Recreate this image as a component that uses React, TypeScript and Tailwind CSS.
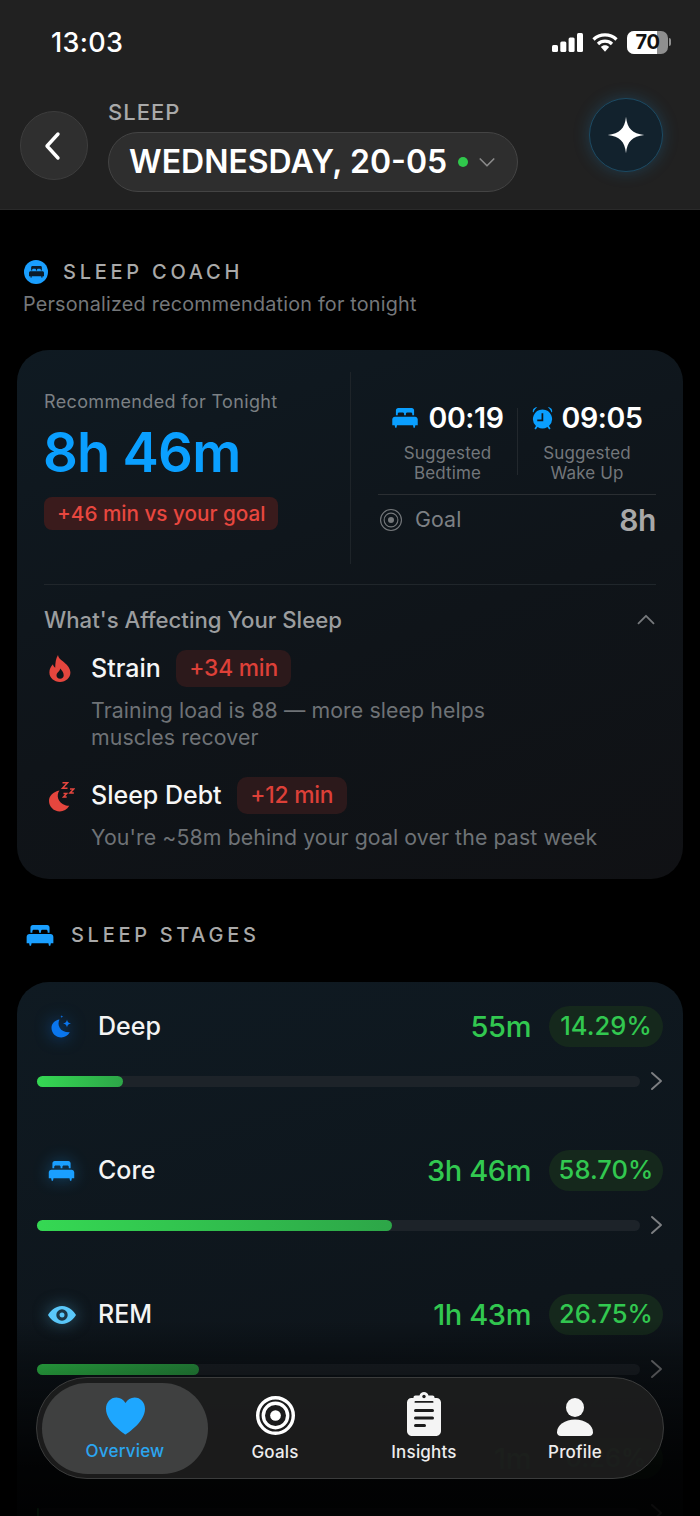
import React from "react";

const FONT = { fontFamily: "Inter, 'Liberation Sans', sans-serif" };

function Bed({ className }: { className?: string }) {
  return (
    <svg viewBox="0 0 28 22" className={className} fill="currentColor">
      <path d="M4 2.5C4 1.1 5.1 0 6.5 0h15C22.900 0 24 1.100 24 2.500V8h-2V6.500C22 5.700 21.300 5 20.500 5h-4C15.700 5 15 5.700 15 6.500V8h-2V6.500C13 5.700 12.300 5 11.500 5h-4C6.700 5 6 5.700 6 6.500V8H4z" />
      <path d="M3 9.500h22c1.700 0 3 1.300 3 3V19h-2.600l-.6 2.800h-1.400L22.800 19H5.200l-.6 2.800H3.200L2.600 19H0v-6.500c0-1.700 1.300-3 3-3z" />
    </svg>
  );
}

function Chevron({ dir, className }: { dir: "up" | "down"; className?: string }) {
  const d = { up: "M3 16 L12 7 L21 16", down: "M3 8 L12 17 L21 8" }[dir];
  return (
    <svg viewBox="0 0 24 24" className={className} fill="none" stroke="currentColor" strokeWidth="2.200" strokeLinecap="round" strokeLinejoin="round">
      <path d={d} />
    </svg>
  );
}

function Target({ className, sw = 2 }: { className?: string; sw?: number }) {
  return (
    <svg viewBox="0 0 40 40" className={className} fill="none" stroke="currentColor" strokeWidth={sw}>
      <circle cx="20" cy="20" r={20 - sw / 2} />
      <circle cx="20" cy="20" r="12.500" />
      <circle cx="20" cy="20" r="5.500" fill="currentColor" stroke="none" />
    </svg>
  );
}

function Flame({ className }: { className?: string }) {
  return (
    <svg viewBox="0 0 22 27" className={className} fill="currentColor">
      <path
        fillRule="evenodd"
        d="M9 0c.6 3.600 3 4.600 6 7.200 3.600 3 6.400 6.500 6.400 10.400 0 5.300-4.500 9.400-10.400 9.400S.4 22.900.4 17.600c0-3.400 1.400-6.300 3.600-8.300.3 1.700 1 2.800 2.200 3.400C6.300 7.800 6.800 3.600 9 0zM11.200 13.500c-.2 1.700-1 2.400-2 3.400-1 1-1.700 2-1.700 3.300 0 2 1.500 3.500 3.600 3.500s3.600-1.500 3.600-3.500c0-2.800-1.800-4.600-3.500-6.700z"
      />
    </svg>
  );
}

function MoonZzz({ className }: { className?: string }) {
  return (
    <svg viewBox="0 0 26 30" className={className} fill="currentColor">
      <path d="M10.500 8.500C7 13 8.500 21 17 23.500c1 .3 2.200.4 3.300.3C18 27.500 14.500 29.500 10.800 29.500 4.800 29.500 0 24.800 0 18.800 0 14 4.200 9.600 10.500 8.500z" />
      <g fill="none" stroke="currentColor" strokeWidth="1.500" strokeLinejoin="miter">
        <path d="M13.500 .8h5l-5 5.400h5" />
        <path d="M21 7h3.800l-3.800 4h3.800" />
        <path d="M14.500 11.500h3.200l-3.200 3.600h3.200" />
      </g>
    </svg>
  );
}

function MoonStars({ className }: { className?: string }) {
  return (
    <svg viewBox="0 0 24 24" className={className} fill="currentColor">
      <path d="M9.500 4.500C6.800 9.800 9.600 17.500 19.800 17.300 18 20.500 14.800 22.500 11.300 22.500 5.800 22.500 1.500 18.200 1.500 12.800 1.500 8.700 5 5 9.500 4.500z" />
      <path d="M17 4.500c.3 2.500 1.400 3.600 4 4-2.600.4-3.700 1.500-4 4-.3-2.500-1.400-3.600-4-4 2.600-.4 3.700-1.500 4-4z" />
      <path d="M11.800 0c.1 1 .6 1.500 1.600 1.600-1 .1-1.500.6-1.600 1.600-.1-1-.6-1.500-1.600-1.600 1-.1 1.500-.6 1.600-1.600z" />
    </svg>
  );
}

function Eye({ className }: { className?: string }) {
  return (
    <svg viewBox="0 0 28 18" className={className} fill="currentColor">
      <path
        fillRule="evenodd"
        d="M14 0c7 0 12.300 5.600 14 9-1.700 3.400-7 9-14 9S1.700 12.400 0 9C1.700 5.600 7 0 14 0zm0 3.300a5.700 5.700 0 1 0 0 11.400 5.700 5.700 0 0 0 0-11.400zm0 3.200a2.500 2.500 0 1 1 0 5 2.500 2.500 0 0 1 0-5z"
      />
    </svg>
  );
}

function Alarm({ className }: { className?: string }) {
  return (
    <svg viewBox="0 0 22 26" className={className} fill="currentColor">
      <path d="M1 6.500C.2 3.800 2.300 1 5.500 1.200 3.700 2.400 2.300 4.200 1.700 6.500zM21 6.500C21.800 3.800 19.700 1 16.500 1.200 18.300 2.400 19.700 4.200 20.300 6.500z" />
      <path
        fillRule="evenodd"
        d="M11 3.500a10 10 0 0 1 6.800 17.300l1.700 2.600-1.500 1-1.800-2.400a10 10 0 0 1-10.400 0L4 24.400l-1.500-1 1.700-2.600A10 10 0 0 1 11 3.500zM10 7.500v6.500H5.500v1.800H11.800V7.500z"
      />
    </svg>
  );
}

function Heart({ className }: { className?: string }) {
  return (
    <svg viewBox="0 0 40 38" className={className} fill="currentColor">
      <path d="M20 38C17.500 36.200 0 25 0 11.500 0 5 4.600 0 10.700 0 14.700 0 18 2.200 20 5.700 22 2.200 25.300 0 29.300 0 35.400 0 40 5 40 11.500 40 25 22.500 36.200 20 38z" />
    </svg>
  );
}

function Clipboard({ className }: { className?: string }) {
  return (
    <svg viewBox="0 0 34 44" className={className}>
      <path
        fill="currentColor"
        d="M17 0c2.200 0 4 1.400 4.500 3.400h4c1.200 0 2 .8 2 2V6h2c2.500 0 4.500 2 4.500 4.500V39c0 2.800-2.200 5-5 5H5c-2.800 0-5-2.200-5-5V10.500C0 8 2 6 4.500 6h2v-.6c0-1.200.8-2 2-2h4C13 1.400 14.800 0 17 0z"
      />
      <rect x="7.500" y="9" width="19" height="1.800" rx=".9" fill="#1c1c1c" />
      <circle cx="17" cy="4.500" r="1.700" fill="#1c1c1c" />
      <rect x="7" y="17" width="20" height="3" rx="1.500" fill="#1c1c1c" />
      <rect x="7" y="24.500" width="20" height="3" rx="1.500" fill="#1c1c1c" />
      <rect x="7" y="32" width="12" height="3" rx="1.500" fill="#1c1c1c" />
    </svg>
  );
}

function Person({ className }: { className?: string }) {
  return (
    <svg viewBox="0 0 36 38" className={className} fill="currentColor">
      <ellipse cx="18" cy="9.500" rx="9" ry="9.500" />
      <path d="M18 21.500c10 0 18 5.600 18 12.700 0 2.300-1.500 3.800-3.800 3.800H3.800C1.500 38 0 36.500 0 34.200 0 27.100 8 21.500 18 21.500z" />
    </svg>
  );
}

function Stage({
  icon,
  name,
  time,
  pct,
  fill,
}: {
  icon?: React.ReactNode;
  name?: string;
  time: string;
  pct: string;
  fill: number;
}) {
  return (
    <div className="h-[144px] px-[20px] pt-[24px]">
      <div className="flex h-[41px] items-center">
        <div className="flex w-[48px] justify-center pl-[1px]">{icon}</div>
        {name && <span className="ml-[13px] mt-[1px] text-[25px] font-medium text-[#f4f4f4]">{name}</span>}
        <span className="ml-auto mt-[1px] text-[29px] font-medium tracking-[-0.4px] text-[#32c850]">{time}</span>
        <span className="ml-[18px] flex h-[41px] w-[114px] items-center justify-center rounded-full bg-[#15281c] text-[25.500px] font-medium tracking-[0.05px] text-[#32c850]">
          {pct}
        </span>
      </div>
      <div className="mt-[24px] flex items-center">
        <div className="h-[11px] flex-1 rounded-full bg-[#1d2329]">
          <div
            className="h-full rounded-full bg-[linear-gradient(90deg,#35d853,#2da648)]"
            style={{ width: `${fill}px` }}
          />
        </div>
        <svg viewBox="0 0 13 20" className="ml-[10px] h-[20px] w-[13px] text-[#7d7f82]" fill="none" stroke="currentColor" strokeWidth="1.900" strokeLinecap="round" strokeLinejoin="round">
          <path d="M2 2 L11 10 L2 18" />
        </svg>
      </div>
    </div>
  );
}

function Factor({
  icon,
  name,
  delta,
  desc,
}: {
  icon: React.ReactNode;
  name: string;
  delta: string;
  desc: React.ReactNode;
}) {
  return (
    <div className="flex">
      <div className="flex w-[48px] shrink-0 justify-start pt-[5px] pl-[5px]">{icon}</div>
      <div>
        <div className="flex h-[37px] items-center">
          <span className="mt-[1px] -ml-[1px] text-[25px] font-medium text-[#f6f6f6]">{name}</span>
          <span className="ml-[15px] flex h-[37px] items-center rounded-[10px] bg-[#2c191b] px-[13.500px] text-[22.800px] font-medium tracking-[-0.2px] text-[#dd4038]">
            {delta}
          </span>
        </div>
        <p className="mt-[10px] -ml-[1px] text-[21.300px] leading-[27px] tracking-[0.1px] text-[#6e7276]">{desc}</p>
      </div>
    </div>
  );
}

export default function App() {
  return (
    <div style={FONT} className="relative h-[1516px] w-[700px] overflow-hidden bg-black">
      {/* Header */}
      <header className="h-[210px] border-b border-[#2a2a2a] bg-[#212121]">
        <div className="flex h-[84px] items-center pl-[51px] pr-[29px]">
          <span className="mt-[2px] text-[27px] font-medium tracking-[0.3px] text-white">13:03</span>
          <div className="ml-auto flex items-center">
            <svg viewBox="0 0 31 19" className="h-[19px] w-[31px] text-white" fill="currentColor">
              <rect x="0" y="12" width="6" height="7" rx="1.500" />
              <rect x="8.300" y="8.500" width="6" height="10.500" rx="1.500" />
              <rect x="16.600" y="4.500" width="6" height="14.500" rx="1.500" />
              <rect x="25" y="0" width="6" height="19" rx="1.500" />
            </svg>
            <svg viewBox="0 0 26 20" className="ml-[9px] h-[20px] w-[26px] text-white" fill="none" stroke="currentColor" strokeWidth="3.200">
              <path d="M1.500 7.500C7.800 1.300 18.200 1.300 24.500 7.500" />
              <path d="M6 12c3.900-3.800 10.100-3.800 14 0" />
              <path fill="currentColor" stroke="none" d="M13 13.200c1.600 0 3 .6 4.100 1.700L13 19.800 8.900 14.900c1.100-1.100 2.500-1.700 4.100-1.700z" />
            </svg>
            <div className="relative ml-[9px] h-[23px] w-[41px] overflow-hidden rounded-[7px] bg-[#8f8f8f]">
              <div className="absolute inset-y-0 left-0 w-[30px] bg-white" />
              <span className="absolute inset-0 flex items-center justify-center text-[20px] font-bold leading-none tracking-[-0.5px] text-[#111]">
                70
              </span>
            </div>
            <div className="ml-[1px] h-[8px] w-[2px] rounded-r-full bg-[#8f8f8f]" />
          </div>
        </div>
        <div className="flex pl-[20px] pr-[37px]">
          <button className="mt-[27px] flex h-[69px] w-[68px] items-center justify-center rounded-full border border-[#3d3d3d] bg-[#2f2f2f] text-white">
            <svg viewBox="0 0 18 30" className="mr-[4px] h-[30px] w-[18px]" fill="none" stroke="currentColor" strokeWidth="3.400" strokeLinecap="round" strokeLinejoin="round">
              <path d="M15 3 L4 15 L15 27" />
            </svg>
          </button>
          <div className="ml-[20px]">
            <div className="mt-[16px] h-[24px] text-[22px] font-medium leading-[24px] tracking-[1px] text-[#a9a9a9]">
              SLEEP
            </div>
            <div className="mt-[8px] flex h-[60px] w-[410px] items-center rounded-full border border-[#444444] bg-[#2e2e2e] pl-[20px]">
              <span className="text-[32px] font-semibold text-white">WEDNESDAY, 20-05</span>
              <span className="ml-[11px] h-[10px] w-[10px] rounded-full bg-[#30c84c]" />
              <Chevron dir="down" className="ml-[10px] h-[18px] w-[18px] text-[#8b8b8b]" />
            </div>
          </div>
          <button className="ml-auto mt-[14px] flex h-[74px] w-[74px] items-center justify-center rounded-full border border-[#1c4a63] bg-[#12222d] text-white shadow-[0_0_16px_rgba(30,130,190,0.28)]">
            <svg viewBox="0 0 24 24" className="h-[38px] w-[38px]" fill="currentColor">
              <path d="M12 0.500C12.800 8 16 11.200 23.500 12 16 12.800 12.800 16 12 23.500 11.200 16 8 12.800 0.500 12 8 11.200 11.200 8 12 0.500Z" />
            </svg>
          </button>
        </div>
      </header>

      {/* Sleep coach heading */}
      <section className="pl-[24px] pt-[49px]">
        <div className="flex h-[26px] items-center">
          <span className="flex h-[24px] w-[24px] items-center justify-center rounded-full bg-[#1a9fff] text-[#0b1c2a]">
            <Bed className="h-[12px] w-[15px]" />
          </span>
          <span className="ml-[15px] text-[20px] font-medium tracking-[3.750px] text-[#a9a9a9]">SLEEP COACH</span>
        </div>
        <p className="mt-[6px] -ml-[1px] text-[19.800px] leading-[26px] tracking-[0.2px] text-[#74777a]">
          Personalized recommendation for tonight
        </p>
      </section>

      {/* Coach card */}
      <section className="mx-[17px] mt-[33px] h-[529px] rounded-[32px] bg-[linear-gradient(160deg,#0f1a22_0%,#0f1419_55%,#101114_100%)] px-[27px]">
        <div className="flex h-[235px] border-b border-[#20262b] pt-[22px]">
          <div className="w-[306px] shrink-0 pt-[18px]">
            <div className="text-[18px] leading-[24px] tracking-[0.35px] text-[#7b8084]">Recommended for Tonight</div>
            <div className="mt-[8px] -ml-[1px] text-[54.500px] font-semibold leading-[60px] tracking-[-0.8px] text-[#0a9fff]">8h 46m</div>
            <span className="mt-[15px] inline-flex h-[33px] items-center rounded-[8px] bg-[#3a1b1c] px-[13px] text-[20.700px] font-medium text-[#e8473f]">
              +46 min vs your goal
            </span>
          </div>
          <div className="h-[192px] w-px shrink-0 bg-[#1e2429]" />
          <div className="ml-[27px] flex-1">
            <div className="flex h-[123px] border-b border-[#2a2e32]">
              <div className="flex w-[139px] flex-col items-center pt-[29px]">
                <div className="flex h-[34px] items-center">
                  <Bed className="h-[20px] w-[26px] text-[#0a9fff]" />
                  <span className="ml-[11px] text-[28.500px] font-semibold tracking-[-0.4px] text-white">00:19</span>
                </div>
                <div className="mt-[8px] text-center text-[17px] leading-[20px] tracking-[0.1px] text-[#73777b]">
                  Suggested
                  <br />
                  Bedtime
                </div>
              </div>
              <div className="mt-[36px] h-[67px] w-px shrink-0 bg-[#22282d]" />
              <div className="flex flex-1 flex-col items-center pt-[29px]">
                <div className="flex h-[34px] items-center">
                  <Alarm className="h-[25px] w-[21px] text-[#0a9fff]" />
                  <span className="ml-[9px] text-[28.500px] font-semibold tracking-[-0.4px] text-white">09:05</span>
                </div>
                <div className="mt-[8px] text-center text-[17px] leading-[20px] tracking-[0.1px] text-[#73777b]">
                  Suggested
                  <br />
                  Wake Up
                </div>
              </div>
            </div>
            <div className="flex h-[50px] items-center pl-[2px]">
              <Target className="h-[22px] w-[22px] text-[#75787b]" sw={2} />
              <span className="ml-[13px] text-[21.300px] tracking-[0.1px] text-[#7d8084]">Goal</span>
              <span className="ml-auto text-[30px] font-semibold tracking-[-0.4px] text-[#a8a8a8]">8h</span>
            </div>
          </div>
        </div>
        <div className="flex h-[70px] items-center">
          <span className="-mt-[1px] text-[22.200px] font-medium text-[#9b9d9f]">What's Affecting Your Sleep</span>
          <Chevron dir="up" className="ml-auto h-[20px] w-[20px] text-[#76797c]" />
        </div>
        <div className="-mt-[5px]">
          <Factor
            icon={<Flame className="h-[27px] w-[22px] text-[#e5463e]" />}
            name="Strain"
            delta="+34 min"
            desc={
              <>
                Training load is 88 — more sleep helps
                <br />
                muscles recover
              </>
            }
          />
          <div className="mt-[26px]">
            <Factor
              icon={<MoonZzz className="h-[30px] w-[26px] text-[#e5463e]" />}
              name="Sleep Debt"
              delta="+12 min"
              desc="You're ~58m behind your goal over the past week"
            />
          </div>
        </div>
      </section>

      {/* Sleep stages heading */}
      <div className="mt-[43px] flex h-[26px] items-center pl-[26px]">
        <Bed className="h-[21px] w-[28px] text-[#1a9fff]" />
        <span className="ml-[17px] text-[20px] font-medium tracking-[3.700px] text-[#a9a9a9]">SLEEP STAGES</span>
      </div>

      {/* Stages card */}
      <section className="mx-[17px] mt-[34px] rounded-t-[32px] bg-[linear-gradient(165deg,#0f1a22_0%,#0e151b_60%,#0d1217_100%)]">
        <Stage
          icon={<MoonStars className="h-[24px] w-[24px] text-[#0a76ee] drop-shadow-[0_0_8px_rgba(10,118,238,0.55)]" />}
          name="Deep"
          time="55m"
          pct="14.29%"
          fill={86}
        />
        <Stage
          icon={<Bed className="h-[20px] w-[27px] text-[#1a9fff] drop-shadow-[0_0_8px_rgba(26,159,255,0.4)]" />}
          name="Core"
          time="3h 46m"
          pct="58.70%"
          fill={355}
        />
        <Stage
          icon={<Eye className="h-[18px] w-[28px] text-[#5ac8fa] drop-shadow-[0_0_8px_rgba(90,200,250,0.5)]" />}
          name="REM"
          time="1h 43m"
          pct="26.75%"
          fill={162}
        />
        <Stage time="1m" pct="0.26%" fill={2} />
      </section>

      {/* Fade beneath the floating tab bar */}
      <div className="pointer-events-none absolute inset-x-0 bottom-0 h-[196px] bg-[linear-gradient(180deg,rgba(0,0,0,0)_0%,rgba(0,0,0,0.3)_20%,rgba(0,0,0,0.85)_75%,rgba(0,0,0,0.92)_100%)]" />

      {/* Tab bar */}
      <nav className="absolute left-[36px] top-[1377px] flex h-[102px] w-[628px] items-center rounded-[51px] border border-[#3b3c3c] bg-[#1e1e1e]/90 pl-[5px]">
        <div className="flex h-[91px] w-[166px] flex-col items-center rounded-[46px] bg-[#3f4040]">
          <Heart className="mt-[14px] h-[38px] w-[39px] text-[#1ea7ff]" />
          <span className="mt-[5px] text-[17px] font-medium leading-[22px] tracking-[0.2px] text-[#2ba6f0]">Overview</span>
        </div>
        <div className="flex h-[91px] w-[134px] flex-col items-center">
          <Target className="mt-[13px] h-[39px] w-[39px] text-white" sw={3.500} />
          <span className="mt-[6px] text-[17px] font-medium leading-[22px] tracking-[0.2px] text-[#ededed]">Goals</span>
        </div>
        <div className="flex h-[91px] w-[164px] flex-col items-center">
          <Clipboard className="mt-[9px] h-[44px] w-[34px] text-[#f4f4f4]" />
          <span className="mt-[5px] text-[17px] font-medium leading-[22px] tracking-[0.2px] text-[#ededed]">Insights</span>
        </div>
        <div className="flex h-[91px] w-[138px] flex-col items-center">
          <Person className="mt-[15px] h-[38px] w-[36px] text-[#f4f4f4]" />
          <span className="mt-[5px] text-[17px] font-medium leading-[22px] tracking-[0.2px] text-[#ededed]">Profile</span>
        </div>
      </nav>
    </div>
  );
}
